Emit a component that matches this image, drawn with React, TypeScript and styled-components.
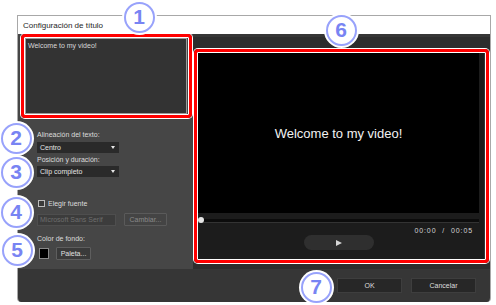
import React from 'react';
import styled, { createGlobalStyle } from 'styled-components';

const GlobalStyle = createGlobalStyle`
  html, body {
    margin: 0;
    padding: 0;
    background: #ffffff;
    font-family: "Liberation Sans", Arial, sans-serif;
  }
`;

const Page = styled.div`
  position: relative;
  width: 496px;
  height: 305px;
  overflow: hidden;
  background: #ffffff;
`;

const Dialog = styled.div`
  position: absolute;
  left: 17px;
  top: 15px;
  width: 474px;
  height: 287px;
  display: flex;
  flex-direction: column;
  border: 1px solid #a8a8a8;
  border-bottom: none;
  border-radius: 0 0 4px 4px;
  overflow: hidden;
  box-sizing: border-box;
`;

const TitleBar = styled.div`
  height: 18px;
  flex: none;
  background: #ffffff;
  display: flex;
  align-items: center;
  padding-left: 5px;
  font-size: 8px;
  color: #1e1e1e;
`;

const Body = styled.div`
  flex: none;
  height: 235px;
  display: flex;
`;

const LeftPanel = styled.div`
  width: 175px;
  flex: none;
  background: #464646;
  display: flex;
  flex-direction: column;
  padding: 0 1px 0 3px;
  box-sizing: border-box;
`;

const RightPanel = styled.div`
  flex: 1;
  background: #2d2d2d;
  border-top: 3px solid #363636;
  padding: 12px 1px 6px 1px;
  display: flex;
`;

const Highlight = styled.div<{ $grow?: boolean }>`
  border: 3px solid #ff0000;
  border-radius: 4px;
  box-shadow: 0 0 0 1px #ffffff, inset 0 0 0 1px #ffffff;
  padding: 1px;
  display: flex;
  flex: ${({ $grow }) => ($grow ? 1 : 'none')};
`;

const TitleBox = styled.div`
  width: 162px;
  height: 76px;
  background: #333333;
  border: 1px solid #9a9a9a;
  box-sizing: border-box;
  padding: 3px 2px;
  font-size: 7px;
  color: #d8d8d8;
`;

const Settings = styled.div`
  display: flex;
  flex-direction: column;
  padding-left: 16px;
`;

const Label = styled.div<{ $top: number }>`
  font-size: 7px;
  line-height: 8px;
  color: #dcdcdc;
  margin-top: ${({ $top }) => $top}px;
`;

const Select = styled.div<{ $top: number }>`
  width: 82px;
  height: 11px;
  margin-top: ${({ $top }) => $top}px;
  background: #2a2a2a;
  display: flex;
  align-items: center;
  justify-content: space-between;
  padding: 0 4px 0 3px;
  box-sizing: border-box;
  font-size: 7px;
  color: #e4e4e4;
`;

const Arrow = styled.span`
  width: 0;
  height: 0;
  border-left: 2.5px solid transparent;
  border-right: 2.5px solid transparent;
  border-top: 3px solid #e8e8e8;
`;

const CheckRow = styled.div`
  display: flex;
  align-items: center;
  gap: 3px;
  margin-top: 22px;
  height: 9px;
  font-size: 7px;
  color: #dcdcdc;
  padding-left: 1px;
`;

const CheckBox = styled.span`
  width: 7px;
  height: 7px;
  border: 1px solid #bdbdbd;
  background: #3a3a3a;
  box-sizing: border-box;
`;

const Row = styled.div<{ $top: number; $gap: number }>`
  display: flex;
  align-items: center;
  gap: ${({ $gap }) => $gap}px;
  margin-top: ${({ $top }) => $top}px;
`;

const DisabledInput = styled.div`
  width: 79px;
  height: 12px;
  background: #3c3c3c;
  border: 1px solid #4e4e4e;
  box-sizing: border-box;
  font-size: 7px;
  color: #6e6e6e;
  padding-left: 2px;
  display: flex;
  align-items: center;
`;

const SmallButton = styled.div<{ $w: number; $disabled?: boolean }>`
  width: ${({ $w }) => $w}px;
  height: 13px;
  background: ${({ $disabled }) => ($disabled ? '#444444' : '#3a3a3a')};
  border: 1px solid ${({ $disabled }) => ($disabled ? '#5a5a5a' : '#5e5e5e')};
  border-radius: 1px;
  box-sizing: border-box;
  font-size: 7px;
  color: ${({ $disabled }) => ($disabled ? '#8a8a8a' : '#e0e0e0')};
  display: flex;
  align-items: center;
  justify-content: center;
`;

const Swatch = styled.span`
  width: 10px;
  height: 11px;
  background: #000000;
  border: 1px solid #8a8a8a;
  box-sizing: border-box;
  margin-left: 2px;
`;

const Player = styled.div`
  flex: 1;
  background: #1c1c1c;
  display: flex;
  flex-direction: column;
  padding: 0 5px 0 0;
  border-right: 1px solid #333;
`;

const Screen = styled.div`
  height: 160px;
  background: #000000;
  display: flex;
  align-items: center;
  justify-content: center;
  font-size: 13px;
  color: #f2f2f2;
  box-sizing: border-box;
`;

const Track = styled.div`
  position: relative;
  margin-top: 6px;
  height: 3px;
  background: #0c0c0c;
  border-bottom: 1px solid #333;
`;

const Knob = styled.span`
  position: absolute;
  left: 0;
  top: -2px;
  width: 6px;
  height: 6px;
  border-radius: 50%;
  background: #e6e6e6;
`;

const Time = styled.div`
  align-self: flex-end;
  margin: 4px 6px 0 0;
  font-size: 7px;
  letter-spacing: 0.9px;
  color: #d4d4d4;
  word-spacing: 3px;
`;

const PlayButton = styled.div`
  align-self: center;
  margin-top: 1px;
  width: 70px;
  height: 15px;
  border-radius: 8px;
  background: #2f2f2f;
  display: flex;
  align-items: center;
  justify-content: center;
`;

const PlayIcon = styled.span`
  width: 0;
  height: 0;
  border-top: 3.5px solid transparent;
  border-bottom: 3.5px solid transparent;
  border-left: 6px solid #d6d6d6;
`;

const Footer = styled.div`
  flex: 1;
  background: #363636;
  display: flex;
  align-items: flex-start;
  justify-content: flex-end;
  gap: 9px;
  padding: 9px 14px 0 0;
`;

const DialogButton = styled.div`
  width: 65px;
  height: 15px;
  background: #272727;
  border: 1px solid #3e3e3e;
  box-sizing: border-box;
  font-size: 7px;
  color: #dddddd;
  display: flex;
  align-items: center;
  justify-content: center;
`;

const Callout = styled.div<{ $x: number; $y: number }>`
  position: absolute;
  left: ${({ $x }) => $x - 15.5}px;
  top: ${({ $y }) => $y - 15.5}px;
  width: 31px;
  height: 31px;
  border-radius: 50%;
  box-sizing: border-box;
  background: #ffffff;
  border: 2px solid #98a2fb;
  box-shadow: 0 0 0 2px #ffffff;
  display: flex;
  align-items: center;
  justify-content: center;
  font-size: 21px;
  font-weight: bold;
  color: #7884f3;
`;

const callouts = [
  { n: 1, x: 139, y: 17 },
  { n: 2, x: 16, y: 138 },
  { n: 3, x: 16, y: 172 },
  { n: 4, x: 16, y: 212 },
  { n: 5, x: 17, y: 250 },
  { n: 6, x: 341, y: 30 },
  { n: 7, x: 316, y: 287 },
];

const App: React.FC = () => (
  <>
    <GlobalStyle />
    <Page>
      <Dialog>
        <TitleBar>Configuración de título</TitleBar>
        <Body>
          <LeftPanel>
            <Highlight>
              <TitleBox>Welcome to my video!</TitleBox>
            </Highlight>
            <Settings>
              <Label $top={13}>Alineación del texto:</Label>
              <Select $top={3}>
                Centro
                <Arrow />
              </Select>
              <Label $top={3}>Posición y duración:</Label>
              <Select $top={2}>
                Clip completo
                <Arrow />
              </Select>
              <CheckRow>
                <CheckBox />
                Elegir fuente
              </CheckRow>
              <Row $top={5} $gap={8}>
                <DisabledInput>Microsoft Sans Serif</DisabledInput>
                <SmallButton $w={43} $disabled>Cambiar...</SmallButton>
              </Row>
              <Label $top={9}>Color de fondo:</Label>
              <Row $top={4} $gap={7}>
                <Swatch />
                <SmallButton $w={35}>Paleta...</SmallButton>
              </Row>
            </Settings>
          </LeftPanel>
          <RightPanel>
            <Highlight $grow>
              <Player>
                <Screen>Welcome to my video!</Screen>
                <Track>
                  <Knob />
                </Track>
                <Time>00:00 / 00:05</Time>
                <PlayButton>
                  <PlayIcon />
                </PlayButton>
              </Player>
            </Highlight>
          </RightPanel>
        </Body>
        <Footer>
          <DialogButton>OK</DialogButton>
          <DialogButton>Cancelar</DialogButton>
        </Footer>
      </Dialog>
      {callouts.map(c => (
        <Callout key={c.n} $x={c.x} $y={c.y}>
          {c.n}
        </Callout>
      ))}
    </Page>
  </>
);

export default App;
